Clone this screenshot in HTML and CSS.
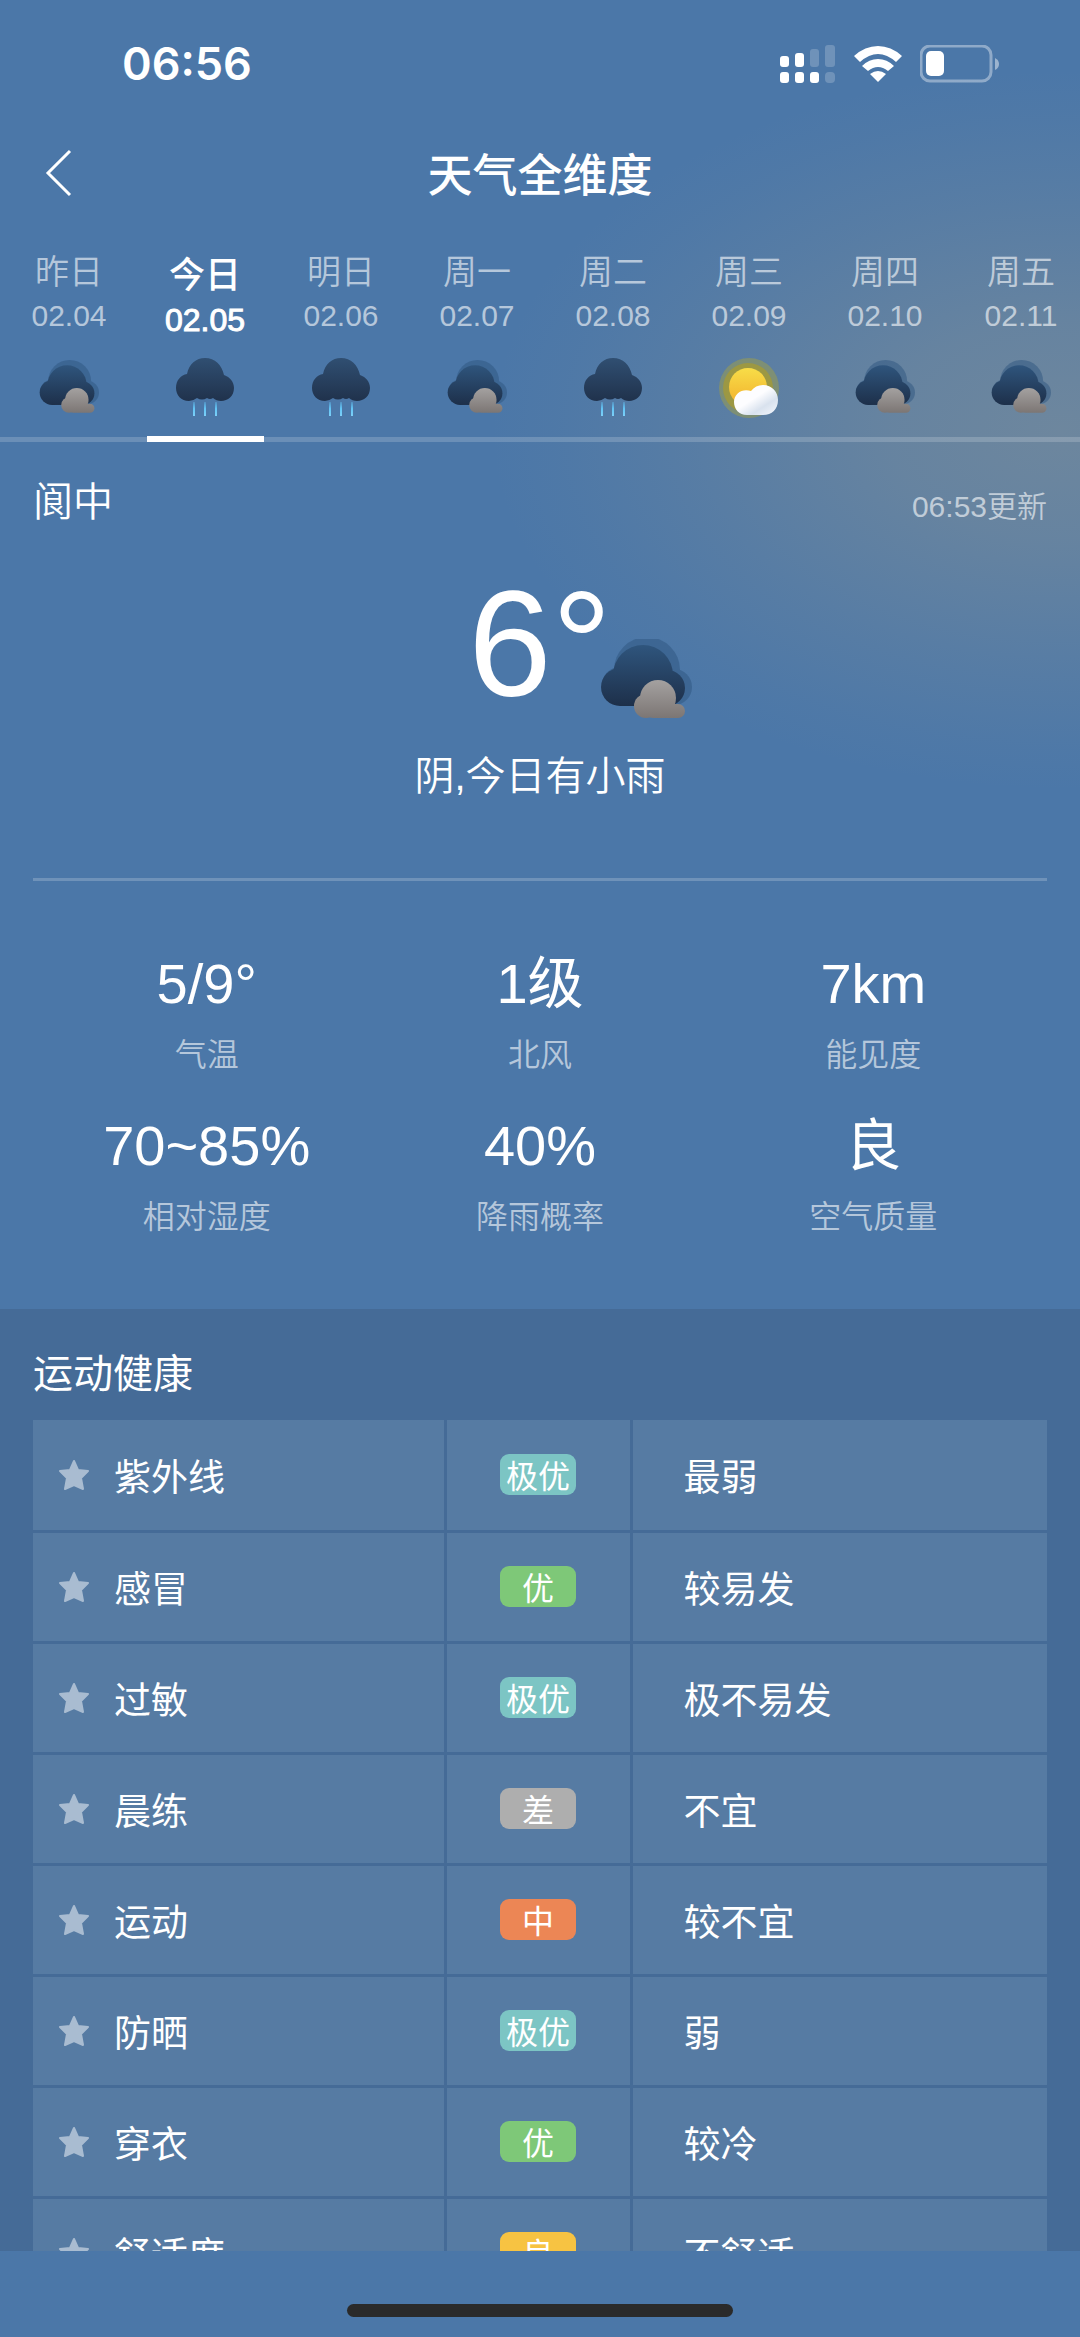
FILE: index.html
```html
<!DOCTYPE html>
<html lang="zh-CN">
<head>
<meta charset="utf-8">
<meta name="viewport" content="width=device-width, initial-scale=1">
<title>天气全维度</title>
<link rel="stylesheet" href="styles.css">
</head>
<body>
<svg class="defs" width="0" height="0" aria-hidden="true">
  <defs>
    <linearGradient id="darkTall" gradientUnits="userSpaceOnUse" x1="0" y1="8" x2="0" y2="70"><stop offset="0" stop-color="#2f557d"/><stop offset="1" stop-color="#1d2f49"/></linearGradient>
    <linearGradient id="rainCloud" gradientUnits="userSpaceOnUse" x1="0" y1="0" x2="0" y2="43"><stop offset="0" stop-color="#304f72"/><stop offset="1" stop-color="#20324c"/></linearGradient>
    <linearGradient id="grey" gradientUnits="userSpaceOnUse" x1="0" y1="44" x2="0" y2="81"><stop offset="0" stop-color="#a3a09f"/><stop offset="1" stop-color="#7c7674"/></linearGradient>
    <linearGradient id="drop" gradientUnits="userSpaceOnUse" x1="0" y1="43" x2="0" y2="58"><stop offset="0" stop-color="#63c4f5" stop-opacity=".2"/><stop offset=".5" stop-color="#63c4f5"/><stop offset="1" stop-color="#7cd0f8"/></linearGradient>
    <linearGradient id="sun" x1="0" y1="0" x2="0" y2="1"><stop offset="0" stop-color="#f8dd48"/><stop offset="1" stop-color="#f2b02c"/></linearGradient>
    <linearGradient id="white" gradientUnits="userSpaceOnUse" x1="28" y1="28" x2="50" y2="62"><stop offset=".35" stop-color="#fdfdff"/><stop offset=".65" stop-color="#d9e2ee"/><stop offset="1" stop-color="#f3f6fc"/></linearGradient>
    <symbol id="overcast" viewBox="-1 2 92 82">
      <g fill="#2f5680" opacity=".5"><circle cx="46" cy="33" r="33"/><circle cx="73" cy="50" r="18"/><circle cx="19" cy="48" r="18"/><rect x="19" y="40" width="54" height="28"/></g>
      <g fill="url(#darkTall)"><circle cx="42" cy="38" r="30"/><circle cx="19" cy="50" r="19"/><circle cx="66" cy="51" r="18"/><rect x="19" y="40" width="47" height="29"/></g>
      <g fill="url(#grey)"><circle cx="57" cy="61" r="18"/><circle cx="45" cy="69" r="12"/><rect x="45" y="67" width="39" height="14" rx="7"/></g>
    </symbol>
    <symbol id="rain" viewBox="0 0 60 60">
      <path fill="url(#rainCloud)" d="M14 43C6 43 1 37 1 30C1 22 6 17 12 16C14 6 21 0 30 0C40 0 47 7 49 17C55 19 59 24 59 30C59 38 53 43 46 43C43 43 40 42 38 40Q35 42 32 40Q27 43 22 40Q18 43 14 43Z"/>
      <path fill="url(#drop)" d="M18 44h2v14h-2zM29 44h2v14h-2zM40 44h2v14h-2z"/>
    </symbol>
    <symbol id="partly" viewBox="0 0 60 60">
      <circle cx="30" cy="30" r="30" fill="#a09f48" fill-opacity=".5"/>
      <circle cx="29" cy="30" r="25" fill="#a99b2e" fill-opacity=".7"/>
      <circle cx="29" cy="29" r="19" fill="url(#sun)"/>
      <path fill="url(#white)" d="M28 57C20 57 15 51 15 44C15 35 24 30 32 33C35 29 39 27 44 27C53 27 59 34 59 42C59 51 53 57 44 57Z"/>
    </symbol>
    <symbol id="star" viewBox="0 0 32 32"><path fill="#a9bcd1" stroke="#a9bcd1" stroke-width="2" stroke-linejoin="round" d="M16 2L20 11L30 12L23 19L25 30L16 26L7 30L9 19L2 12L12 11Z"/></symbol>
  </defs>
</svg>

<header class="status">
  <time class="clock">06:56</time>
  <div class="signals">
    <svg class="cell" width="56" height="40" viewBox="0 0 56 40" fill="#fff"><rect x="0" y="12" width="9" height="11" rx="3"/><rect x="15" y="9" width="9" height="14" rx="3"/><g fill-opacity=".2"><rect x="30" y="5" width="9" height="18" rx="3"/><rect x="45" y="1" width="10" height="22" rx="3"/><rect x="45" y="28" width="10" height="11" rx="4"/></g><rect x="0" y="28" width="9" height="11" rx="3"/><rect x="15" y="28" width="9" height="11" rx="3"/><rect x="30" y="28" width="9" height="11" rx="3"/></svg>
    <svg class="wifi" width="48" height="36" viewBox="0 0 48 36" fill="#fff"><path d="M0 10Q11 0 24 0T48 10L42 16Q33 8 24 8T6 16Z"/><path d="M8 20Q15 13 24 13T40 20L34 25Q29 21 24 21T14 25Z"/><path d="M16 28Q20 25 24 25T32 28L24 36Z"/></svg>
    <svg class="battery" width="80" height="38" viewBox="0 0 80 38"><rect x="1" y="1" width="70" height="35" rx="9" fill="none" stroke="#fff" stroke-opacity=".38" stroke-width="3"/><rect x="6" y="6" width="18" height="25" rx="5" fill="#fff"/><path d="M75 13Q79 15 79 19T75 25Z" fill="#fff" fill-opacity=".45"/></svg>
  </div>
</header>

<nav class="bar">
  <button class="back" type="button" aria-label="返回"><svg width="28" height="48" viewBox="0 0 28 48"><path d="M25 2L3 24L25 46" fill="none" stroke="#fff" stroke-width="3"/></svg></button>
  <h1 class="title">天气全维度</h1>
</nav>

<nav class="days">
  <a class="day" href="#d04"><span class="name">昨日</span><span class="date">02.04</span><svg class="sky"><use href="#overcast"/></svg></a>
  <a class="day today" href="#d05" aria-current="date"><span class="name">今日</span><span class="date">02.05</span><svg class="sky"><use href="#rain"/></svg></a>
  <a class="day" href="#d06"><span class="name">明日</span><span class="date">02.06</span><svg class="sky"><use href="#rain"/></svg></a>
  <a class="day" href="#d07"><span class="name">周一</span><span class="date">02.07</span><svg class="sky"><use href="#overcast"/></svg></a>
  <a class="day" href="#d08"><span class="name">周二</span><span class="date">02.08</span><svg class="sky"><use href="#rain"/></svg></a>
  <a class="day" href="#d09"><span class="name">周三</span><span class="date">02.09</span><svg class="sky"><use href="#partly"/></svg></a>
  <a class="day" href="#d10"><span class="name">周四</span><span class="date">02.10</span><svg class="sky"><use href="#overcast"/></svg></a>
  <a class="day" href="#d11"><span class="name">周五</span><span class="date">02.11</span><svg class="sky"><use href="#overcast"/></svg></a>
</nav>

<main class="content">
  <section class="now">
    <div class="place"><h2 class="city">阆中</h2><span class="updated">06:53更新</span></div>
    <div class="current"><span class="temp">6°</span><svg class="current-sky" width="92" height="82"><use href="#overcast"/></svg></div>
    <p class="summary">阴,今日有小雨</p>
    <dl class="stats">
      <div class="stat"><dd>5/9°</dd><dt>气温</dt></div>
      <div class="stat"><dd>1级</dd><dt>北风</dt></div>
      <div class="stat"><dd>7km</dd><dt>能见度</dt></div>
      <div class="stat"><dd>70~85%</dd><dt>相对湿度</dt></div>
      <div class="stat"><dd>40%</dd><dt>降雨概率</dt></div>
      <div class="stat"><dd>良</dd><dt>空气质量</dt></div>
    </dl>
  </section>
  <section class="health">
    <h2 class="heading">运动健康</h2>
    <table class="indices">
      <colgroup><col class="col-name"><col class="col-level"><col></colgroup>
      <tbody>
      <tr><th scope="row"><span class="item"><svg class="star"><use href="#star"/></svg>紫外线</span></th><td><span class="badge best">极优</span></td><td>最弱</td></tr>
      <tr><th scope="row"><span class="item"><svg class="star"><use href="#star"/></svg>感冒</span></th><td><span class="badge good">优</span></td><td>较易发</td></tr>
      <tr><th scope="row"><span class="item"><svg class="star"><use href="#star"/></svg>过敏</span></th><td><span class="badge best">极优</span></td><td>极不易发</td></tr>
      <tr><th scope="row"><span class="item"><svg class="star"><use href="#star"/></svg>晨练</span></th><td><span class="badge poor">差</span></td><td>不宜</td></tr>
      <tr><th scope="row"><span class="item"><svg class="star"><use href="#star"/></svg>运动</span></th><td><span class="badge medium">中</span></td><td>较不宜</td></tr>
      <tr><th scope="row"><span class="item"><svg class="star"><use href="#star"/></svg>防晒</span></th><td><span class="badge best">极优</span></td><td>弱</td></tr>
      <tr><th scope="row"><span class="item"><svg class="star"><use href="#star"/></svg>穿衣</span></th><td><span class="badge good">优</span></td><td>较冷</td></tr>
      <tr><th scope="row"><span class="item"><svg class="star"><use href="#star"/></svg>舒适度</span></th><td><span class="badge fair">良</span></td><td>不舒适</td></tr>
      </tbody>
    </table>
  </section>
</main>
<footer class="home"><div class="home-indicator"></div></footer>
</body>
</html>
```
FILE: styles.css
```css
* { box-sizing: border-box; }

body {
  margin: 0;
  height: 100vh;
  display: flex;
  flex-direction: column;
  overflow: hidden;
  color: #fff;
  font-family: "Liberation Sans", "Noto Sans CJK SC", sans-serif;
  background:
    radial-gradient(ellipse 570px 360px at 1060px 430px, rgba(143, 150, 148, .5) 0%, rgba(143, 150, 148, .4) 30%, rgba(143, 150, 148, .18) 65%, rgba(143, 150, 148, .05) 88%, rgba(143, 150, 148, 0) 100%),
    #4b77a8;
}

h1, h2, p, dl, dd { margin: 0; font-weight: 400; }
.defs { position: absolute; }

.title, .name, .heading, .indices { font-family: "Noto Sans CJK SC", sans-serif; }

.status {
  display: flex;
  align-items: center;
  justify-content: space-between;
  height: 128px;
  padding: 0 80px 0 122px;
}
.clock { font: 600 45px/48px Inter, sans-serif; }
.signals { display: flex; align-items: center; gap: 18px; }

.bar {
  display: grid;
  grid-template-columns: 1fr auto 1fr;
  align-items: center;
  height: 90px;
  padding: 0 45px;
}
.back { display: flex; padding: 0; border: 0; background: none; justify-self: start; }
.title { grid-column: 2; font-size: 45px; line-height: 60px; font-weight: 500; }

.days {
  display: flex;
  flex: none;
  height: 224px;
  padding-left: 1px;
  overflow: hidden;
  box-shadow: inset 0 -5px rgba(255, 255, 255, .18);
}
.day {
  display: flex;
  flex: 0 0 136px;
  flex-direction: column;
  align-items: center;
  padding-top: 32px;
  color: rgba(255, 255, 255, .6);
  text-decoration: none;
}
.name { font-size: 34px; line-height: 40px; font-weight: 350; }
.date { font-size: 30px; line-height: 36px; margin-top: 8px; }
.sky { width: 60px; height: 60px; margin-top: 24px; }
.today { color: #fff; }
.today .name { font-size: 36px; line-height: 44px; font-weight: 500; }
.today .date { font-size: 32px; -webkit-text-stroke: 1px; }
.today .sky { margin-top: 20px; }
.today::after { content: ""; width: 117px; height: 6px; margin-top: auto; background: #fff; }

.content { flex: 1; min-height: 0; overflow: auto; scrollbar-width: none; }
.now { padding: 36px 33px 0; }
.place { display: flex; justify-content: space-between; align-items: center; height: 48px; }
.city { font-size: 40px; line-height: 48px; font-weight: 350; }
.updated { font-size: 30px; line-height: 40px; color: rgba(255, 255, 255, .6); font-weight: 350; padding-top: 10px; }

.current { display: grid; grid-template-columns: 1fr auto 1fr; margin-top: 32px; height: 180px; }
.temp { grid-column: 2; font-size: 150px; line-height: 172px; }
.current-sky { align-self: end; margin: 0 0 17px -12px; }
.summary { margin-top: 8px; font-size: 40px; line-height: 60px; text-align: center; font-weight: 350; }

.stats {
  display: grid;
  grid-template-columns: repeat(3, 1fr);
  row-gap: 24px;
  margin-top: 72px;
  padding: 60px 7px 68px;
  border-top: 3px solid rgba(255, 255, 255, .2);
}
.stat { display: flex; flex-direction: column; align-items: center; gap: 4px; }
.stat dd { font-size: 56px; line-height: 86px; }
.stat dt { font-size: 32px; line-height: 48px; color: rgba(255, 255, 255, .6); font-weight: 350; }

.health { padding: 32px 33px; background: #456b97; }
.heading { font-size: 40px; line-height: 60px; padding-bottom: 19px; }
.indices { width: 100%; border-collapse: collapse; table-layout: fixed; font-size: 37px; line-height: 48px; }
.col-name { width: 412px; }
.col-level { width: 186px; }
.indices tr { height: 111px; }
.indices th, .indices td {
  padding: 0;
  font-weight: 400;
  text-align: left;
  background: #567ba3;
  background-clip: padding-box;
  border: 3px solid #456b97;
}
.indices th:first-child { border-left: 0; }
.indices td:last-child { border-right: 0; padding-left: 51px; }
.indices tr:first-child > * { border-top: 0; }
.item { display: flex; align-items: center; gap: 24px; padding-left: 25px; }
.star { width: 32px; height: 32px; }
.badge {
  display: block;
  width: 76px;
  margin: 0 auto;
  border-radius: 9px;
  font-size: 32px;
  line-height: 41px;
  text-align: center;
}
.best { background: #7cc5c4; }
.good { background: #7ec878; }
.poor { background: #aeaeae; }
.medium { background: #ec8655; }
.fair { background: #f7c342; }

.home { display: flex; flex: none; align-items: end; justify-content: center; height: 86px; padding-bottom: 20px; }
.home-indicator { width: 386px; height: 13px; border-radius: 7px; background: #2a2a2a; }
```
